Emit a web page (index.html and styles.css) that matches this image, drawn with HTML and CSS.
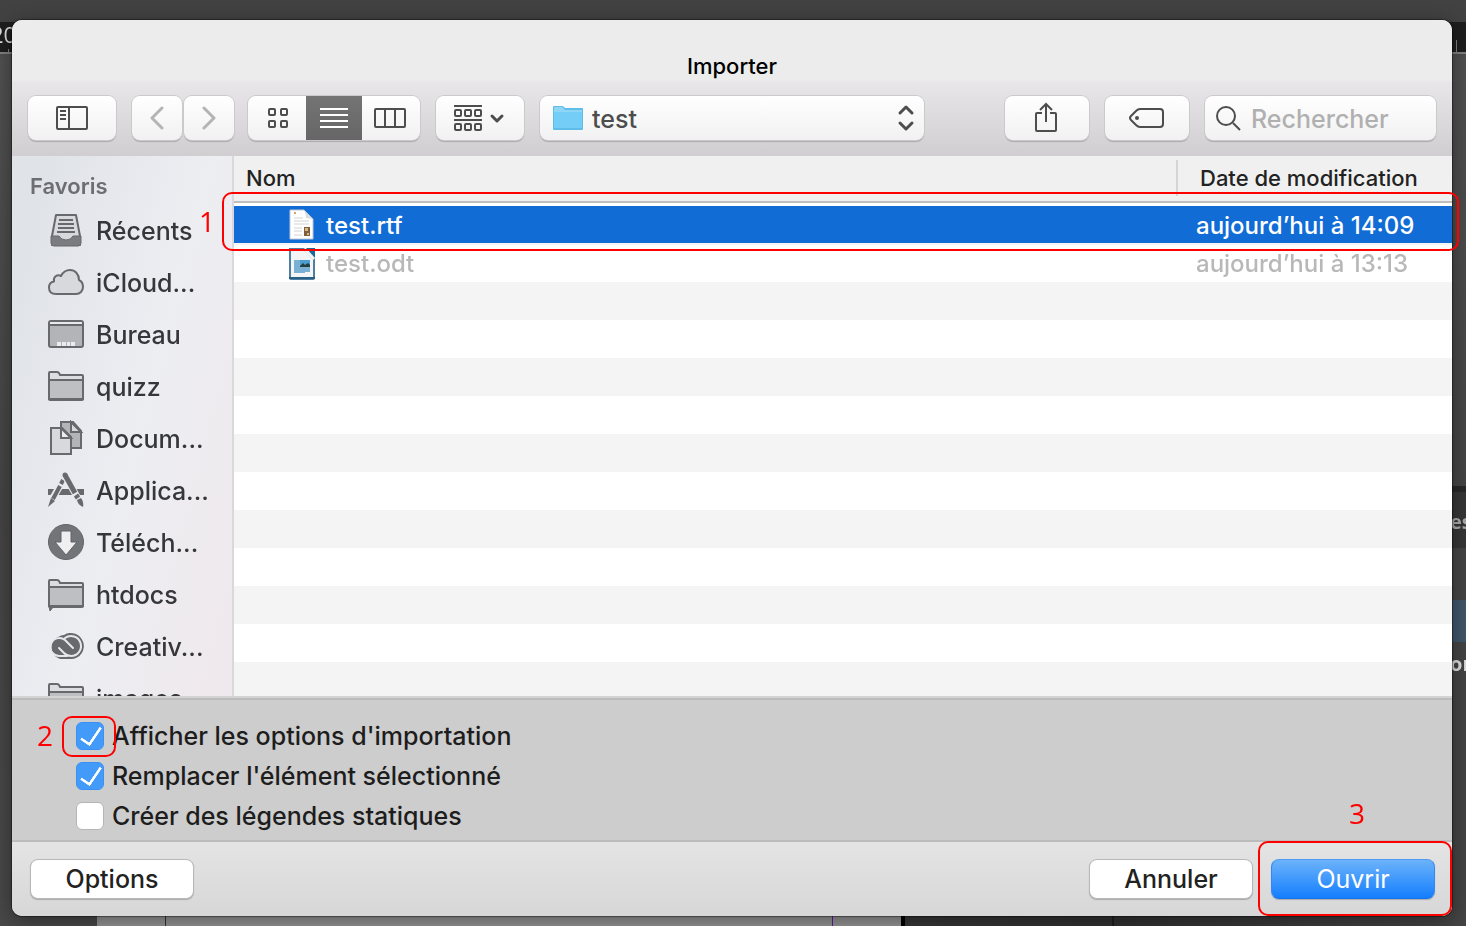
FILE: index.html
```html
<!DOCTYPE html>
<html lang="fr">
<head>
<meta charset="utf-8">
<title>Importer</title>
<link rel="stylesheet" href="styles.css">
</head>
<body>
<div class="backdrop" aria-hidden="true">
  <div class="ruler"><span class="ruler-number">20</span></div>
  <div class="side-panel">
    <span class="panel-tab">es</span>
    <span class="panel-selection"></span>
    <span class="panel-label">or</span>
  </div>
  <div class="page-edge"></div>
</div>

<main class="dialog">
  <header class="header">
    <h1 class="title">Importer</h1>
    <div class="toolbar">
      <button class="tool tool-wide" aria-label="Barre latérale">
        <svg width="32" height="24" viewBox="0 0 32 24" fill="none" stroke="#4d4d4d" stroke-width="2"><rect x="1" y="1" width="30" height="22" rx="1"/><path d="M13 1v22M4 5h6M4 9h6M4 13h6"/></svg>
      </button>
      <div class="nav">
        <button class="tool tool-nav" aria-label="Précédent"><svg width="16" height="24" viewBox="0 0 16 24" fill="none" stroke="#b4b4b4" stroke-width="3" stroke-linecap="round" stroke-linejoin="round"><path d="M13 2 3 12l10 10"/></svg></button>
        <button class="tool tool-nav" aria-label="Suivant"><svg width="16" height="24" viewBox="0 0 16 24" fill="none" stroke="#b4b4b4" stroke-width="3" stroke-linecap="round" stroke-linejoin="round"><path d="m3 2 10 10L3 22"/></svg></button>
      </div>
      <div class="views">
        <button class="view" aria-label="Icônes"><svg width="20" height="20" viewBox="0 0 20 20" fill="none" stroke="#4d4d4d" stroke-width="2"><rect x="1" y="1" width="6" height="6" rx="1"/><rect x="13" y="1" width="6" height="6" rx="1"/><rect x="1" y="13" width="6" height="6" rx="1"/><rect x="13" y="13" width="6" height="6" rx="1"/></svg></button>
        <button class="view view-on" aria-label="Liste" aria-pressed="true"><svg width="28" height="20" viewBox="0 0 28 20" stroke="#fff" stroke-width="2"><path d="M0 1h28M0 7h28M0 13h28M0 19h28"/></svg></button>
        <button class="view" aria-label="Colonnes"><svg width="32" height="20" viewBox="0 0 32 20" fill="none" stroke="#4d4d4d" stroke-width="2"><rect x="1" y="1" width="30" height="18" rx="1"/><path d="M11 1v18M21 1v18"/></svg></button>
      </div>
      <button class="tool tool-wide tool-group" aria-label="Grouper">
        <svg width="52" height="26" viewBox="0 0 52 26" fill="none" stroke="#4d4d4d" stroke-width="2"><path d="M0 1h28M0 15h28"/><rect x="1" y="5" width="6" height="6" rx="1"/><rect x="11" y="5" width="6" height="6" rx="1"/><rect x="21" y="5" width="6" height="6" rx="1"/><rect x="1" y="19" width="6" height="6" rx="1"/><rect x="11" y="19" width="6" height="6" rx="1"/><rect x="21" y="19" width="6" height="6" rx="1"/><path d="m38 11 5 5 5-5" stroke-width="3" stroke-linecap="round" stroke-linejoin="round"/></svg>
      </button>
      <div class="location">
        <svg width="30" height="26" viewBox="0 0 30 26"><path d="M0 2q0-1 1-1h8q1 0 2 1l1 1h17q1 0 1 1v20q0 1-1 1H1q-1 0-1-1z" fill="#5fbde9"/><path d="M1 3q0-1 1-1h7l3 3h17v2H1z" fill="#8fd6f6"/><path d="M1 7h28v16H1z" fill="#74cdf6"/></svg>
        <select class="location-select" aria-label="Emplacement"><option>test</option></select>
        <svg width="18" height="28" viewBox="0 0 18 28" fill="none" stroke="#4d4d4d" stroke-width="3" stroke-linecap="round" stroke-linejoin="round"><path d="m3 9 6-6 6 6M3 19l6 6 6-6"/></svg>
      </div>
      <button class="tool tool-action" aria-label="Partager">
        <svg width="26" height="34" viewBox="0 0 26 34" fill="none" stroke="#4d4d4d" stroke-width="2"><path d="M8 12H3q-1 0-1 1v16q0 1 1 1h18q1 0 1-1V13q0-1-1-1h-5M12 21V3M6 9l6-6 6 6"/></svg>
      </button>
      <button class="tool tool-action" aria-label="Tags">
        <svg width="36" height="20" viewBox="0 0 36 20" fill="none" stroke="#4d4d4d" stroke-width="2"><path d="M11 1h20q3 0 3 3v12q0 3-3 3H11q-2 0-4-2l-5-5q-2-2 0-4l5-5q2-2 4-2z"/><circle cx="8" cy="10" r="2" fill="#4d4d4d" stroke="none"/></svg>
      </button>
      <label class="search">
        <svg width="26" height="26" viewBox="0 0 26 26" fill="none" stroke="#4d4d4d" stroke-width="2"><circle cx="10" cy="11" r="9"/><path d="m17 18 7 7"/></svg>
        <input class="search-input" type="search" placeholder="Rechercher" aria-label="Rechercher">
      </label>
    </div>
  </header>

  <div class="browser">
    <nav class="sidebar">
      <h2 class="sidebar-title">Favoris</h2>
      <a class="place" href="#"><svg width="36" height="36" viewBox="0 0 36 36" fill="none" stroke="#68696d" stroke-width="2"><path d="M8 3h20l4 21v9H4v-9z" fill="#d8d9dd" stroke-linejoin="round"/><path d="M3 24h8q2 4 7 4t7-4h8v7q0 3-3 3H6q-3 0-3-3z" fill="#7b7c80" stroke-width="1"/><path d="M11 8h14M10 12h16M10 16h16M9 20h18"/></svg>Récents</a>
      <a class="place" href="#"><svg width="36" height="36" viewBox="0 0 36 36" fill="#d8d9dd" stroke="#68696d" stroke-width="2"><path d="M8 30C3 30 1 27 1 23.500 1 20 3 18 6 17.500 5 13 9 10 13 12 15 8 18 6 22 6c5 0 9 4 9 10 2.500 1 4 4 4 7 0 4-3 7-7 7z" stroke-linejoin="round"/></svg>iCloud...</a>
      <a class="place" href="#"><svg width="36" height="36" viewBox="0 0 36 36" fill="none" stroke="#68696d" stroke-width="2"><rect x="1" y="5" width="34" height="26" rx="2" fill="#b3b4b8"/><path d="M2 6h32v2H2z" fill="#e8e9ec" stroke="none"/><path d="M1 9h34"/><path d="M9 26h4v4H9zM14 26h4v4h-4zM19 26h3v4h-3zM23 26h4v4h-4z" fill="#ececf0" stroke="none"/></svg>Bureau</a>
      <a class="place" href="#"><svg width="36" height="36" viewBox="0 0 36 36" fill="#dcdde0" stroke="#68696d" stroke-width="2"><path d="M1 31V5q0-1 1-1h7q2 0 3 3h22q1 0 1 1v23q0 1-1 1H2q-1 0-1-1z"/><path d="M1 12h34v19H1z" fill="#bebfc3"/></svg>quizz</a>
      <a class="place" href="#"><svg width="36" height="36" viewBox="0 0 36 36" fill="#d8d9dd" stroke="#68696d" stroke-width="2"><path d="M13 2h12l8 9v17H13z" fill="#b3b4b8"/><path d="M23 2v10h10z"/><path d="M3 8h11l9 9v17H3z"/><path d="M13 8v10h10z" fill="#ececf0"/></svg>Docum...</a>
      <a class="place" href="#"><svg width="36" height="36" viewBox="0 0 36 36" fill="none" stroke="#68696d"><path d="M0 20h36" stroke-width="6"/><path d="M17 5 2 31" stroke="#e7e8ec" stroke-width="7"/><path d="m15 8-2 4M12 14 5 27" stroke-width="4"/><path d="m3 26 4 3-7 6z" fill="#68696d" stroke="none"/><path d="m18 5 15 27" stroke="#e7e8ec" stroke-width="7"/><path d="m17 3 10 18M28 23l2 3" stroke-width="5"/><circle cx="17" cy="3" r="2.500" fill="#68696d" stroke="none"/><path d="m29 28 4-2q3 4 2 9-5-2-6-7z" fill="#68696d" stroke="none"/></svg>Applica...</a>
      <a class="place" href="#"><svg width="36" height="36" viewBox="0 0 36 36"><circle cx="18" cy="18" r="17.500" fill="#737478" stroke="#626367"/><path d="M13 7h10v11h6L18 31 7 18h6z" fill="#efeff2" stroke="#626367"/></svg>Téléch...</a>
      <a class="place" href="#"><svg width="36" height="36" viewBox="0 0 36 36" fill="#dcdde0" stroke="#68696d" stroke-width="2"><path d="M1 29V5q0-1 1-1h7q2 0 3 3h22q1 0 1 1v22q0 1-1 1H2q-1 0-1-1z"/><path d="M1 11h34v19H1z" fill="#bebfc3"/><path d="M1 30h5l-4 5z" fill="#68696d" stroke-width="1"/></svg>htdocs</a>
      <a class="place" href="#"><svg width="36" height="36" viewBox="0 0 36 36" fill="none"><path d="M12 31a12 12 0 0 1 0-23q2-1 4-1a13 13 0 1 1 8 24z" fill="#68696d"/><path d="M19 28h-7a9 9 0 1 1 5-16l8 8M17 10a10 10 0 1 1 6 18q-4 0-7-3l-5-5" stroke="#e7e8ec" stroke-width="2" stroke-linecap="round" stroke-linejoin="round"/></svg>Creativ...</a>
      <a class="place" href="#"><svg width="36" height="36" viewBox="0 0 36 36" fill="#dcdde0" stroke="#68696d" stroke-width="2"><path d="M1 31V5q0-1 1-1h7q2 0 3 3h22q1 0 1 1v23q0 1-1 1H2q-1 0-1-1z"/><path d="M1 12h34v19H1z" fill="#bebfc3"/></svg>images</a>
    </nav>
    <div class="listing">
      <table class="files">
        <thead><tr><th class="col-name">Nom</th><th class="col-date"><span class="col-label">Date de modification</span></th></tr></thead>
        <tbody>
          <tr class="file selected"><td><span class="file-name"><svg width="28" height="32" viewBox="0 0 28 32"><path d="M2 1h14l9 9v20H2z" fill="#fff" stroke="#bfc6d2"/><path d="M16 1q2 5 2 8 4 0 7 2z" fill="#d8dbe0"/><path d="M6 4h2" stroke="#e0a060" stroke-width="2"/><path d="M6 9h9M6 12h15M6 15h15M6 19h8M6 22h8M6 26h8" stroke="#d2d2d2"/><path d="M16 18h6v9h-6z" fill="#80603c"/><path d="M17 19h3v3h-3zM19 24h2v2h-2z" fill="#d8b880"/></svg>test.rtf</span></td><td>aujourd’hui à 14:09</td></tr>
          <tr class="file dimmed"><td><span class="file-name"><svg width="28" height="32" viewBox="0 0 28 32"><path d="M2 1h14l10 10v19q0 1-1 1H3q-1 0-1-1z" fill="#f3f4f6" stroke="#4f7f9f" stroke-width="2"/><path d="M1 30h26" stroke="#285f85" stroke-width="2"/><path d="M18 0h9v10z" fill="#1d6b97"/><path d="m16 1 10 10" stroke="#fff" stroke-width="2"/><path d="M6 12h16v13H6z" fill="#79b0d3"/><path d="M12 12h10v7H12z" fill="#4a9ed0"/><path d="m12 18 3-3 2 2 3-2 2 2v2H12z" fill="#263f3c"/><path d="M17 24h5v2h-5z" fill="#f3f4f6"/></svg>test.odt</span></td><td>aujourd’hui à 13:13</td></tr>
        </tbody>
      </table>
      <div class="empty-rows"></div>
    </div>
    <span class="mark mark-file"></span><span class="step step-one">1</span>
  </div>

  <section class="options">
    <label class="option"><input class="check" type="checkbox" checked>Afficher les options d'importation</label>
    <label class="option"><input class="check" type="checkbox" checked>Remplacer l'élément sélectionné</label>
    <label class="option"><input class="check" type="checkbox">Créer des légendes statiques</label>
    <span class="mark mark-option"></span><span class="step step-two">2</span><span class="step step-three">3</span>
  </section>

  <footer class="footer">
    <button class="button">Options</button>
    <button class="button button-cancel">Annuler</button>
    <button class="button button-primary">Ouvrir</button>
    <span class="mark mark-open"></span>
  </footer>
</main>
</body>
</html>
```
FILE: styles.css
```css
* { box-sizing: border-box; }

body {
  display: flex;
  height: 100vh;
  margin: 0;
  padding: 20px 14px 10px 12px;
  overflow: hidden;
  background: #464646;
  color: #222;
  font: 450 25px/32px Inter, "Liberation Sans", sans-serif;
}

button, input, select { font: inherit; color: inherit; }
svg { display: block; flex: none; }

/* Application behind the dialog */
.backdrop { position: fixed; inset: 0; background: linear-gradient(#424242 22px, #505050 60px, #444 500px, #484848); }
.ruler { position: absolute; top: 22px; left: 0; right: 0; height: 32px; background: #1e1e1e; border-bottom: 2px solid #808080; }
.ruler::before, .ruler::after { content: ""; position: absolute; bottom: 0; width: 1px; background: #808080; }
.ruler::before { left: 8px; height: 3px; }
.ruler::after { right: 9px; height: 12px; }
.ruler-number { position: absolute; left: -9px; top: -3px; color: #ddd; font: 22px/30px "Open Sans", sans-serif; }
.side-panel { position: absolute; top: 486px; right: 0; width: 40px; bottom: 0; background: #444; border-top: 6px solid #282828; font: bold 20px/24px "Open Sans", sans-serif; }
.panel-tab { display: block; height: 56px; padding: 18px 0 0 24px; background: #363636; color: #aaa; }
.panel-selection { display: block; height: 42px; margin-top: 52px; background: #40566a; }
.panel-label { display: block; padding: 10px 0 0 24px; color: #ddd; }
.page-edge { position: absolute; left: 97px; right: 0; bottom: 0; height: 20px; background: linear-gradient(90deg, #929292 68px, #333 68px, #333 69px, #929292 69px, #929292 735px, #5b1ca0 735px, #5b1ca0 736px, #929292 736px, #929292 804px, #000 804px, #000 808px, #363636 808px, #303030 1015px, #1e1e1e 1015px, #1e1e1e 1017px, #303030 1017px, #444); }

.dialog {
  position: relative;
  display: flex;
  flex: 1;
  flex-direction: column;
  min-width: 0;
  border-radius: 10px;
  background: #ececec;
  box-shadow: 0 0 1px 1px rgba(0, 0, 0, .4), 0 4px 20px rgba(0, 0, 0, .4);
}

/* Title and toolbar */
.header { border-radius: 10px 10px 0 0; background: linear-gradient(#ececec 60px, #e8e6e9 62px, #d0ced0 136px); }
.title { margin: 0; padding: 32px 0 14px; text-align: center; color: #000; font-size: 22px; line-height: 28px; font-weight: 450; }
.toolbar { display: flex; gap: 16px; padding: 2px 16px 16px; }
.tool, .views, .location, .search {
  display: flex;
  align-items: center;
  justify-content: center;
  height: 44px;
  padding: 0;
  border: 0;
  border-radius: 8px;
  background: linear-gradient(#fff, #f1f1f1);
  box-shadow: 0 0 0 1px #cbc9cb, 0 2px 1px #aaa;
}
.tool-wide { width: 88px; }
.nav { display: flex; gap: 2px; margin-right: -2px; }
.tool-nav { width: 50px; }
.views { overflow: hidden; }
.view { display: flex; align-items: center; justify-content: center; width: 58px; height: 44px; padding: 0; border: 0; background: none; }
.view:first-child { padding-left: 2px; }
.view:last-child { padding-right: 2px; }
.view-on { width: 56px; background: linear-gradient(#747474, #666); }
.location { width: 384px; padding: 0 9px 0 13px; gap: 9px; color: #4d4d4d; }
.location-select { flex: 1; min-width: 0; height: 40px; padding: 1px 0 0; border: 0; appearance: none; background: none; }
.tool-action { width: 84px; }
.tool-group + .location { margin-right: auto; }
.search { width: 231px; padding: 0 11px; gap: 9px; }
.search-input { flex: 1; min-width: 0; height: 40px; padding: 1px 0 0; border: 0; background: none; appearance: none; }
.search-input::placeholder { color: #b0b0b0; opacity: 1; }

/* Places and files */
.browser { position: relative; display: flex; flex: 1; min-height: 0; border-bottom: 2px solid #d3d3d3; }
.sidebar { width: 222px; flex: none; overflow: hidden; border-right: 2px solid #d9d8dc; background: linear-gradient(105deg, #e0e3e8 10%, #edeef2 55%, #efe8ec); }
.sidebar-title { margin: 0; padding: 14px 18px 0; color: #6d6e73; font-size: 22px; line-height: 32px; font-weight: 600; }
.place { display: flex; align-items: center; gap: 12px; height: 52px; padding-left: 36px; color: #36373a; text-decoration: none; white-space: nowrap; }
.place svg { margin-bottom: 2px; }
.sidebar-title + .place { margin-top: 3px; }
.listing { display: flex; flex: 1; flex-direction: column; min-width: 0; background: #fff; }
.files { width: 100%; table-layout: fixed; border-collapse: collapse; }
.files th { height: 46px; padding: 0 0 2px 12px; border-bottom: 2px solid #bebebe; background: #f0f0f0; text-align: left; font-size: 22px; font-weight: 500; line-height: 36px; }
.files .col-date { width: 276px; padding: 0; }
.col-label { display: block; margin: 2px 0 4px; padding-left: 22px; border-left: 2px solid #d5d5d5; white-space: nowrap; }
.files tbody::before { content: ""; display: table-row; height: 4px; }
.file { height: 38px; }
.file td { padding: 0 0 0 20px; white-space: nowrap; font-size: 24px; line-height: 36px; }
.file td:first-child { padding-left: 54px; }
.file-name { display: flex; align-items: center; gap: 10px; }
.selected td { padding-top: 1px; border-bottom: 2px solid #f4f4f4; background: #116cd6; color: #fff; font-weight: 500; line-height: 35px; }
.dimmed td { color: #b8b8b8; }
.empty-rows { flex: 1; background: repeating-linear-gradient(#f4f4f4 0 38px, #fff 38px 76px); }

/* Import options */
.options { position: relative; display: flex; flex-direction: column; align-items: flex-start; padding: 16px 64px 4px; border-top: 2px solid #bcbcbc; border-bottom: 2px solid #bcbcbc; background: #cdcdcd; }
.option { display: flex; align-items: center; gap: 8px; height: 40px; color: #1d1d1d; white-space: nowrap; }
.check { width: 28px; height: 28px; margin: 0; appearance: none; border: 1px solid #b5b5b5; border-radius: 6px; background: #fff; }
.check:checked { border-color: #3a91f5; background: #429bf9; }
.check:checked::before { content: ""; display: block; width: 9px; height: 19px; margin: 0 0 0 8px; border: solid #fff; border-width: 0 3px 3px 0; border-radius: 1px; transform: rotate(34deg); }

.footer { position: relative; display: flex; gap: 18px; padding: 17px 17px 17px 18px; border-radius: 0 0 10px 10px; background: linear-gradient(#e4e4e4, #d7d7d7); }
.button { width: 164px; height: 40px; padding: 0; border: 1px solid #b8b8b8; border-radius: 8px; background: #fff; box-shadow: 0 1px 1px #aaa; line-height: 32px; }
.button-cancel { margin-left: auto; }
.button-primary { border-color: #4d9df5 #3488f5 #1573f0; background: linear-gradient(#6cb3fa, #147efe); color: #fff; font-weight: 400; }

/* Tutorial callouts */
.mark { position: absolute; border: 2px solid #f00; border-radius: 10px; pointer-events: none; }
.mark-file { top: 36px; left: 210px; right: -7px; height: 59px; }
.mark-option { top: 16px; left: 50px; width: 54px; height: 41px; }
.mark-open { top: -1px; right: 0; width: 194px; height: 75px; }
.step { position: absolute; color: #f00; font: 28px/36px "Open Sans", sans-serif; }
.step-one { top: 47px; left: 187px; }
.step-two { top: 17px; left: 25px; }
.step-three { top: 95px; right: 87px; }
```
